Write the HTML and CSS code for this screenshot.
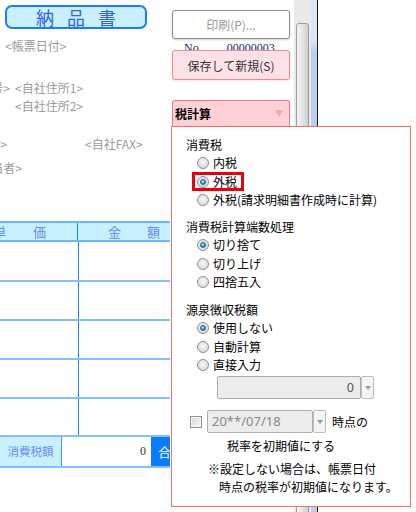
FILE: index.html
```html
<!DOCTYPE html>
<html lang="ja">
<head>
<meta charset="utf-8">
<title>納品書</title>
<link rel="stylesheet" href="styles.css">
</head>
<body>
<div class="screen">
  <div class="doc">
    <div class="title"><span>納</span><span>品</span><span>書</span></div>
    <div class="line l-date">&lt;帳票日付&gt;</div>
    <div class="line l-addr1"><span class="tail w10"><span>&lt;自社郵便番号&gt;</span></span><span class="after5">&lt;自社住所1&gt;</span></div>
    <div class="line l-addr2">&lt;自社住所2&gt;</div>
    <div class="line l-fax"><span class="tail w7"><span>&lt;自社TEL&gt;</span></span><span class="after78">&lt;自社FAX&gt;</span></div>
    <div class="line l-person"><span class="tail w22"><span>&lt;自社担当者&gt;</span></span></div>

    <div class="table">
      <div class="thead">
        <div class="c1 h1"><span>単</span><span>価</span></div>
        <div class="c2 h2"><span>金</span><span>額</span></div>
      </div>
      <div class="row r1"><div class="c1"></div><div class="c2"></div></div>
      <div class="row r2"><div class="c1"></div><div class="c2"></div></div>
      <div class="row r2"><div class="c1"></div><div class="c2"></div></div>
      <div class="row r2"><div class="c1"></div><div class="c2"></div></div>
      <div class="row r5"><div class="c1"></div><div class="c2"></div></div>
      <div class="sum">
        <div class="s-label">消費税額</div>
        <div class="s-val">0</div>
        <div class="s-total">合計</div>
      </div>
    </div>
  </div>

  <div class="side">
    <div class="btn btn-print">印刷(P)...</div>
    <div class="docno"><span class="no">No.</span><span class="num">00000003</span></div>
    <div class="btn btn-save">保存して新規(S)</div>
    <div class="taxhead"><span>税計算</span><span class="tri"></span></div>
  </div>

  <div class="scroll"><div class="thumb"></div></div>
  <div class="frame"></div>
  <div class="rest"></div>

  <div class="popup">
    <div class="group">
      <div class="head">消費税</div>
      <div class="opt"><span class="radio"></span><span>内税</span></div>
      <div class="opt"><span class="hl"><span class="radio on"></span><span>外税</span></span></div>
      <div class="opt"><span class="radio"></span><span>外税(請求明細書作成時に計算)</span></div>
    </div>
    <div class="group g2">
      <div class="head">消費税計算端数処理</div>
      <div class="opt"><span class="radio on"></span><span>切り捨て</span></div>
      <div class="opt"><span class="radio"></span><span>切り上げ</span></div>
      <div class="opt"><span class="radio"></span><span>四捨五入</span></div>
    </div>
    <div class="group g3">
      <div class="head">源泉徴収税額</div>
      <div class="opt"><span class="radio on"></span><span>使用しない</span></div>
      <div class="opt"><span class="radio"></span><span>自動計算</span></div>
      <div class="opt"><span class="radio"></span><span>直接入力</span></div>
    </div>
    <div class="combo-row">
      <div class="combo num-combo">0</div>
      <div class="drop"><span class="dtri"></span></div>
    </div>
    <div class="date-row">
      <span class="check"></span>
      <div class="combo date-combo">20**/07/18</div>
      <div class="drop"><span class="dtri"></span></div>
      <span class="date-label">時点の</span>
    </div>
    <div class="note n1">税率を初期値にする</div>
    <div class="note n2">※設定しない場合は、帳票日付</div>
    <div class="note n3">時点の税率が初期値になります。</div>
  </div>
</div>
</body>
</html>
```

FILE: styles.css
```css
html, body {
  margin: 0;
  padding: 0;
  background: #fff;
}
body {
  font-family: "Noto Sans CJK JP", "Noto Sans", sans-serif;
  font-size: 12px;
  color: #000;
}
.screen {
  position: relative;
  width: 416px;
  height: 512px;
  display: flex;
  overflow: hidden;
}

/* ---------- document preview ---------- */
.doc {
  width: 170px;
  flex-shrink: 0;
  overflow: hidden;
}
.title {
  margin: 5px 0 0 5px;
  width: 142px;
  height: 24px;
  box-sizing: border-box;
  border: 2px solid #1a7cff;
  border-radius: 7px;
  background: #c9f0ff;
  display: flex;
  justify-content: center;
  align-items: center;
  gap: 13px;
  color: #2e63ee;
  font-size: 18px;
  line-height: 20px;
}
.line {
  height: 16px;
  line-height: 16px;
  font-size: 12px;
  color: #9b9b9b;
  display: flex;
  white-space: nowrap;
}
.l-date { margin-top: 9px; padding-left: 5px; }
.l-addr1 { margin-top: 26px; }
.l-addr2 { margin-top: 2px; padding-left: 15px; }
.l-fax { margin-top: 22px; }
.l-person { margin-top: 8px; }
.tail {
  display: flex;
  justify-content: flex-end;
  overflow: hidden;
  flex-shrink: 0;
}
.tail > span { flex-shrink: 0; }
.w10 { width: 10px; }
.w7 { width: 7px; }
.w22 { width: 22px; }
.after5 { margin-left: 5px; }
.after78 { margin-left: 78px; }

.table { margin-top: 45px; }
.thead {
  display: flex;
  height: 17px;
  border-top: 2px solid #6ab6ff;
  border-bottom: 2px solid #6ab6ff;
  background: #c8f0ff;
  color: #6a8cf7;
  font-size: 13px;
  line-height: 17px;
}
.c1 {
  width: 78px;
  flex-shrink: 0;
  border-right: 1px solid #1a84ff;
}
.c2 { flex: 1; }
.h1 {
  display: flex;
  justify-content: flex-end;
  gap: 27px;
  padding-right: 31px;
  overflow: hidden;
  box-sizing: border-box;
}
.h1 > span, .h2 > span { flex-shrink: 0; }
.h2 {
  display: flex;
  gap: 26px;
  padding-left: 30px;
}
.row { display: flex; }
.r1 { height: 38px; }
.r2 { height: 37px; border-top: 2px solid #80c0ff; }
.r5 { height: 36px; border-top: 2px solid #80c0ff; }
.sum {
  display: flex;
  height: 29px;
  border-top: 2px solid #80c0ff;
  border-bottom: 2px solid #80c0ff;
  line-height: 29px;
}
.s-label {
  width: 61px;
  flex-shrink: 0;
  background: #c8f0ff;
  border-right: 1px solid #3a95ff;
  color: #6b8cff;
  font-size: 11.5px;
  text-align: center;
}
.s-val {
  width: 84px;
  flex-shrink: 0;
  padding-right: 5px;
  text-align: right;
  font-family: "Liberation Serif", serif;
  font-size: 12px;
  color: #333;
}
.s-total {
  flex: 1;
  background: #0a7cff;
  color: #fff;
  padding-left: 7px;
  font-size: 13px;
  white-space: nowrap;
}

/* ---------- side panel ---------- */
.side {
  width: 124px;
  flex-shrink: 0;
  padding-left: 2px;
  box-sizing: border-box;
}
.btn {
  width: 118px;
  box-sizing: border-box;
  border-radius: 3px;
  display: flex;
  align-items: center;
  justify-content: center;
  font-size: 12px;
}
.btn-print {
  margin-top: 10px;
  height: 29px;
  border: 1px solid #8c8c8c;
  background: #fff;
  color: #9a9a9a;
  box-shadow: 0 1px 2px rgba(0, 0, 0, 0.18);
}
.docno {
  height: 11px;
  overflow: hidden;
  padding-left: 12px;
  font-family: "Liberation Serif", serif;
  font-size: 12px;
  line-height: 18px;
  color: #1a2a6a;
  display: flex;
  white-space: nowrap;
}
.num { margin-left: 25px; }
.btn-save {
  height: 30px;
  border: 1px solid #f08a92;
  background: #ffe2e7;
  color: #333;
  box-shadow: 0 1px 2px rgba(240, 120, 130, 0.25);
}
.taxhead {
  margin-top: 20px;
  width: 118px;
  height: 26px;
  box-sizing: border-box;
  border: 1px solid #f07a82;
  border-bottom: none;
  border-radius: 3px 3px 0 0;
  background: #ffd0d8;
  display: flex;
  align-items: center;
  justify-content: space-between;
  padding: 0 6px 0 2px;
  font-weight: bold;
  font-size: 12px;
}
.tri {
  width: 0;
  height: 0;
  border-left: 4.5px solid transparent;
  border-right: 4.5px solid transparent;
  border-top: 7px solid #f5aab2;
}

/* ---------- scrollbar & frame ---------- */
.scroll {
  width: 17px;
  flex-shrink: 0;
  background: #e9e9e9;
  padding: 23px 0 0 2px;
  box-sizing: border-box;
  overflow: hidden;
}
.thumb {
  width: 13px;
  height: 600px;
  box-sizing: border-box;
  border: 1px solid #9c9c9c;
  border-radius: 3px;
  background: linear-gradient(90deg, #f4f4f4 0%, #e4e4e4 50%, #cfcfcf 100%);
}
.frame {
  width: 6px;
  flex-shrink: 0;
  background: linear-gradient(180deg, #dbe7f5 0, #dbe7f5 40px, #b9d0ea 52px, #b9d0ea 100%);
  border-right: 1px solid #1c1c1c;
}
.rest { flex: 1; background: #fff; }

/* ---------- popup ---------- */
.popup {
  position: absolute;
  left: 171px;
  top: 126px;
  width: 238px;
  height: 379px;
  border: 1px solid #f07070;
  background: #fff;
  padding: 9px 0 0 14px;
  box-sizing: content-box;
}
.popup { width: 224px; height: 370px; }
.head {
  height: 18px;
  line-height: 18px;
}
.opt {
  height: 18.5px;
  line-height: 18.5px;
  padding-left: 11px;
  display: flex;
  align-items: center;
}
.opt > span:last-child, .hl > span:last-child { white-space: nowrap; }
.hl {
  position: relative;
  display: flex;
  align-items: center;
  height: 18.5px;
}
.hl::after {
  content: "";
  position: absolute;
  top: -0.5px;
  bottom: 0;
  left: -5px;
  right: -7px;
  border: 3px solid #e60012;
}
.radio {
  width: 12px;
  height: 12px;
  box-sizing: border-box;
  border-radius: 50%;
  border: 1px solid #8e8f8f;
  background: radial-gradient(circle at 50% 40%, #f6f6f6 0, #e2e2e2 55%, #cfcfcf 100%);
  margin-right: 4px;
  flex-shrink: 0;
  display: flex;
  align-items: center;
  justify-content: center;
}
.radio.on::after {
  content: "";
  width: 6px;
  height: 6px;
  box-sizing: border-box;
  border-radius: 50%;
  border: 1px solid #1f5f8f;
  background: radial-gradient(circle at 40% 35%, #c4ecff 0, #3a9ad8 55%, #1d6aa0 100%);
}
.g2 { margin-top: 8.5px; }
.g3 { margin-top: 9.5px; }
.combo-row {
  margin-top: 1.5px;
  padding-left: 31px;
  display: flex;
  height: 23px;
}
.combo {
  height: 23px;
  box-sizing: border-box;
  border: 1px solid #adadad;
  border-radius: 2px;
  background: #ececec;
  line-height: 21px;
  font-size: 12.5px;
}
.num-combo {
  width: 144px;
  text-align: right;
  padding-right: 6px;
  color: #555;
  font-family: "Noto Sans", sans-serif;
}
.drop {
  width: 13px;
  height: 23px;
  box-sizing: border-box;
  border: 1px solid #bdbdbd;
  border-radius: 2px;
  background: #f4f4f4;
  display: flex;
  align-items: center;
  justify-content: center;
}
.dtri {
  width: 0;
  height: 0;
  border-left: 3px solid transparent;
  border-right: 3px solid transparent;
  border-top: 4px solid #9a9a9a;
}
.date-row {
  margin-top: 11px;
  padding-left: 4px;
  height: 23px;
  display: flex;
  align-items: center;
}
.check {
  width: 12px;
  height: 12px;
  box-sizing: border-box;
  border: 1px solid #8f8f8f;
  background: linear-gradient(135deg, #d6d6d6 0%, #f6f6f6 100%);
  box-shadow: inset 0 0 0 1px #f8f8f8;
  margin-right: 5px;
  flex-shrink: 0;
}
.date-combo {
  width: 106px;
  padding-left: 4px;
  color: #888;
  font-family: "Noto Sans", sans-serif;
  font-size: 13px;
}
.date-label {
  margin-left: 6px;
  white-space: nowrap;
}
.note {
  height: 18px;
  line-height: 18px;
  white-space: nowrap;
}
.n1 { margin-top: 4px; padding-left: 41px; }
.n2 { margin-top: 5px; padding-left: 22px; }
.n3 { padding-left: 33px; }
```
